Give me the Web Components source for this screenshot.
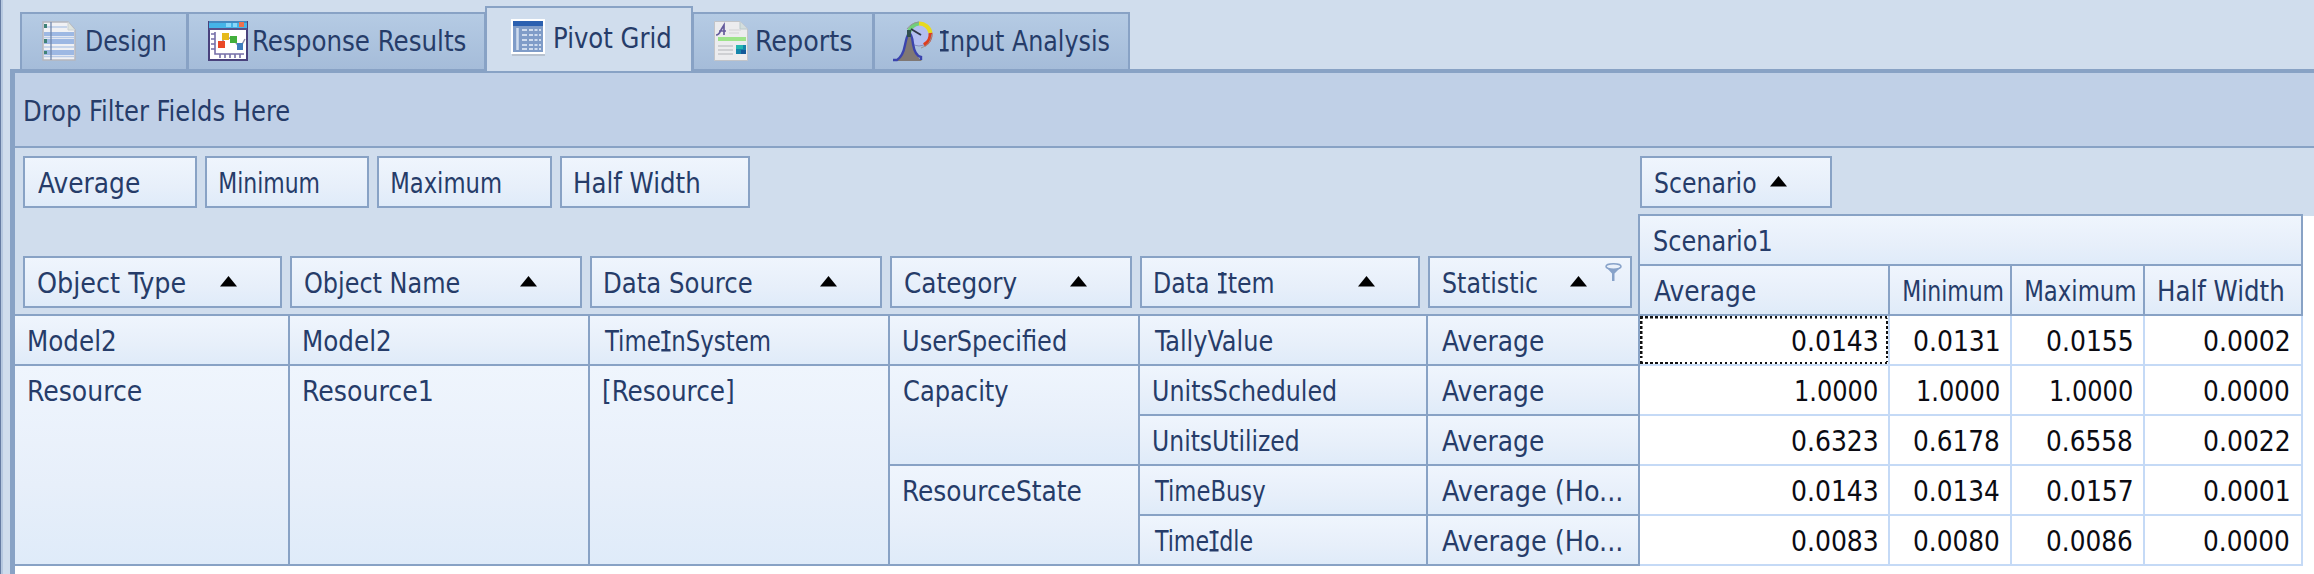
<!DOCTYPE html>
<html lang="en">
<head>
<meta charset="utf-8">
<title>Pivot Grid</title>
<style>
html, body { margin: 0; height: 574px; overflow: hidden; }
body {
  --line: #88a2c5; --soft: #c5daf6; --pane: #d0dded; --cell: linear-gradient(#eff5fd, #e7effa 60%, #dfebf9);
  background: var(--pane); color: #263c69;
  font: 27.5px "DejaVu Sans Condensed", "DejaVu Sans", sans-serif;
}
</style>
</head>
<body>
<experiment-view></experiment-view>
<script>
const define = (name, html, setup) => {
  const template = document.createElement('template');
  template.innerHTML = html;
  customElements.define(name, class extends HTMLElement {
    connectedCallback() {
      if (this.shadowRoot) return;
      this.attachShadow({ mode: 'open' }).append(template.content.cloneNode(true));
      if (setup) setup(this, this.shadowRoot);
    }
  });
};

/* A label whose glyphs are condensed or widened to fill the given width.
   An <i> inside it is a capital I that gets a bar at its head and its foot. */
const pen = document.createElement('canvas').getContext('2d');
pen.font = '27.5px "DejaVu Sans Condensed", "DejaVu Sans", sans-serif';
define('fit-text', `
  <style>
    :host { display: inline-block; white-space: nowrap; vertical-align: top; }
    span { display: inline-block; transform-origin: 0 0; }
    ::slotted(i) { font-style: normal !important; padding: 0 1px; margin: 0 1px; background-repeat: no-repeat;
      background-image: linear-gradient(#263c69, #263c69), linear-gradient(#263c69, #263c69);
      background-size: 100% 2.500px; background-position: 0 6px, 0 24px; }
  </style><span><slot></slot></span>`, (host, root) => {
  const m = pen.measureText(host.textContent);
  const bars = host.querySelectorAll('i').length;
  let left = m.actualBoundingBoxLeft, ink = left + m.actualBoundingBoxRight + bars * 4;
  if (host.textContent[0] === 'I') { ink -= left + 1; left = -1; }
  const w = +host.getAttribute('w') || ink, k = w / ink;
  host.style.width = w + 'px';
  root.querySelector('span').style.transform = `translateX(${left * k}px) scaleX(${k})`;
});

const icons = {
  design: `<svg width="34" height="40" viewBox="0 0 34 40"><path d="M1 1H26L33 9V39H1Z" fill="#f0f1f4" stroke="#b5b7bd" stroke-width="1.5"/><path d="M26 1V9H33" fill="#dfe5df" stroke="#ccd1d4"/><path d="M2 11h30v4H2zM2 18h30v5H2zM2 29h30v5H2z" fill="#9db8e3"/><path d="M2 6h23M2 16.500h30M2 26h30M2 35.500h30" stroke="#b8cbe8" stroke-width="1.500"/><path d="M9 1V39" stroke="#7187ad" stroke-width="1.300"/><path d="M2 3h3v4H2zM2 18h3v4H2zM2 30h3v3H2z" fill="#3f8277"/></svg>`,
  response: `<svg width="40" height="40" viewBox="0 0 40 40"><rect x="1" y="1" width="38" height="38" fill="#fff" stroke="#49427c" stroke-width="2"/><path d="M1 1h38v6H1z" fill="#45b4e8"/><path d="M1 0h38v2H1z" fill="#4489c0"/><path d="M18 2h5v4h-5zM25 2h4v4h-4z" fill="#8ad7fa"/><path d="M31 1h5v5h-5z" fill="#ef704d"/><path d="M1 8H39" stroke="#57508a" stroke-width="2"/><path d="M7 11V33H36M3 13h4M3 18h4M3 23h4M3 28h4M12 33v4M17 33v4M22 33v4M27 33v4M32 33v4" fill="none" stroke="#766fa8" stroke-width="1.600"/><path d="M13 23L17 16L25 18L32 27L37 18" fill="none" stroke="#8b8fa8" stroke-width="1.500"/><path d="M10 20h7v7h-7z" fill="#ea4827"/><path d="M14 12h7v7h-7z" fill="#e6ba1c"/><path d="M22 15h7v7h-7z" fill="#42af3b"/><path d="M29 22h6v7h-6z" fill="#3d7dbe"/></svg>`,
  pivot: `<svg width="34" height="38" viewBox="0 0 34 38"><path d="M1 35h33v2H1z" fill="#b8c2cf"/><path d="M0 0h34v35H0z" fill="#fff"/><path d="M2 2h30v31H2z" fill="#7f9cc8"/><path d="M2 2h30v5H2z" fill="#2b60b0"/><path d="M6.500 9v22" stroke="#cfdcee" stroke-width="2.500"/><path d="M11 11h19M11 16h19M11 21h19M11 26h19M11 30h19" stroke="#cfdcee" stroke-width="2" stroke-dasharray="5 2 4 1.500 3 1.500"/></svg>`,
  reports: `<svg width="34" height="40" viewBox="0 0 34 40"><path d="M.5.5H26L33.500 8V39.500H.5Z" fill="#ececee" stroke="#c2c4c8"/><path d="M26 1V8H33" fill="#d3dedd" stroke="#bac8ca"/><path d="M2 14Q5 14 7 9L10 4V14M5 10H12" fill="none" stroke="#655b9c" stroke-width="1.700"/><path d="M15 9h12M15 12h10" stroke="#d2d2d4"/><path d="M4 16h28v4H4z" fill="#9de489"/><path d="M4 25h15M4 29h15M4 33h15" stroke="#cfd0d3" stroke-width="2"/><path d="M22 24h10v9H22z" fill="#1685ab"/><path d="M22 24h7v4h-7z" fill="#25b6b0"/><path d="M27 29h5v4h-5z" fill="#145998"/></svg>`,
  input: `<svg width="40" height="41" viewBox="0 0 40 41"><circle cx="26" cy="14" r="11" fill="#b3bff0" stroke="#878ebd"/><path d="M16 12A11 11 0 0 1 26 2.500" fill="none" stroke="#70cf78" stroke-width="4"/><path d="M26 2.500A11.500 11.500 0 0 1 37.500 12" fill="none" stroke="#e7d91f" stroke-width="4"/><path d="M37.500 12A12 12 0 0 1 31 24" fill="none" stroke="#dd3d20" stroke-width="4"/><path d="M14 8Q18 2 26 1M39 13Q38 24 28 27" fill="none" stroke="#969394"/><path d="M18 8L28 14" stroke="#30374a" stroke-width="2"/><path d="M3 40Q10 36 12 24Q15 10 16 11Q19 12 21 25Q23 36 29 40Z" fill="#807873"/><path d="M0 39H4Q10 35 12 24Q14 14 16 12Q19 13 20 23Q22 35 28 36V39" fill="none" stroke="#3b44ad" stroke-width="2.400"/><path d="M14 9h4v7h-4z" fill="#31504f"/></svg>`
};

define('page-tab', `
  <style>
    :host { display: flex; box-sizing: border-box; height: 57px; margin-top: 12px; line-height: 54px;
      border: 2px solid var(--line); border-bottom: 0; background: linear-gradient(#b5cbe4, #a5bcd9); }
    :host([active]) { height: 65px; margin-top: 6px; line-height: 61px; background: var(--pane); padding-bottom: 2px; }
    #i { line-height: 0; padding-top: 7px; flex: none; }
    :host([active]) #i { padding-top: 11px; }
    svg { display: block; }
  </style><div id="i"></div><slot></slot>`, (host, root) => {
  const i = root.getElementById('i');
  i.innerHTML = icons[host.getAttribute('icon')];
  i.style.marginLeft = host.getAttribute('pad') + 'px';
  i.style.marginRight = host.getAttribute('gap') + 'px';
  host.style.width = host.getAttribute('w') + 'px';
});

define('field-chip', `
  <style>
    :host { display: flex; box-sizing: border-box; height: 52px; line-height: 51px; padding-left: 12.500px; flex: none;
      border: 2px solid var(--line); background: var(--cell); }
    svg { display: none; flex: none; }
    :host([sort]) .s { display: block; margin: 18px 0 0 auto; }
    :host([filter]) .f { display: block; margin: 5px 8px 0 18px; }
  </style><slot></slot>
  <svg class="s" width="17" height="11" viewBox="0 0 17 11"><path d="M8.500 0L17 10.500H0Z" fill="#000"/></svg>
  <svg class="f" width="17" height="18" viewBox="0 0 17 18"><path d="M1 4L7 10.500V18H9.500V10.500L16 4Z" fill="#87a2c9"/><ellipse cx="8.500" cy="3.500" rx="7.500" ry="2.700" fill="#eaf1fa" stroke="#87a2c9" stroke-width="1.500"/></svg>`,
  (host, root) => {
    host.style.width = host.getAttribute('w') + 'px';
    if (host.hasAttribute('sort')) root.querySelector('.s').style.marginRight = host.getAttribute('sort') + 'px';
  });

define('head-cell', `
  <style>
    :host { display: block; box-sizing: border-box; line-height: 51px; overflow: hidden; padding-left: 14px;
      border: solid var(--line); border-width: 0 2px 2px 0; background: var(--cell); }
  </style><slot></slot>`);

define('value-cell', `
  <style>
    :host { display: block; box-sizing: border-box; height: 50px; line-height: 51px; text-align: right; color: #0b0b12;
      border: solid var(--soft); border-width: 0 2px 2px 0; background-color: #fff; padding-right: 12px; }
    :host([focus]) {
      --h: repeating-linear-gradient(90deg, #111 0 2.500px, #fff 2.500px 5px);
      --v: repeating-linear-gradient(#111 0 2.500px, #fff 2.500px 5px);
      background: var(--h) top/100% 2.500px no-repeat, var(--h) bottom/100% 2.500px no-repeat,
        var(--v) left/2.500px 100% no-repeat, var(--v) right/2.500px 100% no-repeat, #fff; background-origin: padding-box; background-clip: padding-box; }
  </style><slot></slot>`);

const T = (s, w) => `<fit-text w="${w}">${s.replace('I', '<i>I</i>')}</fit-text>`;
const H = (s, w, rows = 1) => `<head-cell style="grid-row:span ${rows}">${T(s, w)}</head-cell>`;
const values = [
  ['0.0143', '0.0131', '0.0155', '0.0002'],
  ['1.0000', '1.0000', '1.0000', '0.0000'],
  ['0.6323', '0.6178', '0.6558', '0.0022'],
  ['0.0143', '0.0134', '0.0157', '0.0001'],
  ['0.0083', '0.0080', '0.0086', '0.0000']
];
const V = r => values[r].map((v, c) =>
  `<value-cell${r + c ? '' : ' focus'} style="padding-right:${[11, 11, 11, 12][c]}px">${T(v, v[0] === '1' ? 81.5 : 85)}</value-cell>`).join('');

define('pivot-grid', `
  <style>
    :host { display: block; background: #fff; }
    .filter { height: 73px; line-height: 76px; padding-left: 9.500px; background: #c0d0e7; border-bottom: 2px solid var(--line); }
    .top { display: grid; grid-template-columns: 1625px 1fr; height: 168px; }
    .rows { background: var(--pane); display: flex; flex-direction: column; justify-content: space-between; padding: 8px 0 6px 8px;
      border-bottom: 2px solid var(--line); }
    .row { display: flex; gap: 8px; }
    .cols { margin-left: -2px; }
    .band { background: var(--pane); height: 66px; padding: 8px 0 0 2px; box-sizing: border-box; }
    .edge { background: linear-gradient(var(--pane) 2px, #fff 2px); }
    .heads { display: grid; grid-template: 52px 50px / 252px 122px 133px 158px; width: 665px; }
    .heads > :first-child { grid-column: span 4; border-top: 2px solid var(--line); }
    .heads > .l { border-left: 2px solid var(--line); }
    .body { display: grid; grid-auto-rows: 50px; grid-template-columns: 275px 300px 300px 250px 288px 212px 250px 122px 133px 158px; }
  </style>
  <div class="filter">${T('Drop Filter Fields Here', 264)}</div>
  <div class="top">
    <div class="rows">
      <div class="row">
        <field-chip w="174">${T('Average', 101)}</field-chip>
        <field-chip w="164">${T('Minimum', 99)}</field-chip>
        <field-chip w="175">${T('Maximum', 109)}</field-chip>
        <field-chip w="190">${T('Half Width', 124)}</field-chip>
      </div>
      <div class="row">
        <field-chip w="259" sort="43">${T('Object Type', 147)}</field-chip>
        <field-chip w="292" sort="43">${T('Object Name', 154)}</field-chip>
        <field-chip w="292" sort="43">${T('Data Source', 146.5)}</field-chip>
        <field-chip w="242" sort="43">${T('Category', 111.5)}</field-chip>
        <field-chip w="280" sort="43">${T('Data Item', 118.5)}</field-chip>
        <field-chip w="204" sort="0" filter>${T('Statistic', 94.5)}</field-chip>
      </div>
    </div>
    <div class="cols">
      <div class="band"><field-chip w="192" sort="43">${T('Scenario', 100.5)}</field-chip></div>
      <div class="edge"><div class="heads">
        <head-cell class="l">${T('Scenario1', 117)}</head-cell>
        <head-cell class="l">${T('Average', 101)}</head-cell>
        <head-cell>${T('Minimum', 99)}</head-cell>
        <head-cell>${T('Maximum', 109.5)}</head-cell>
        <head-cell>${T('Half Width', 124)}</head-cell>
      </div></div>
    </div>
  </div>
  <div class="body">
    ${H('Model2', 86)}${H('Model2', 86)}${H('TimeInSystem', 166)}${H('UserSpecified', 161.5)}${H('TallyValue', 118)}${H('Average', 101)}${V(0)}
    ${H('Resource', 112, 4)}${H('Resource1', 128, 4)}${H('[Resource]', 129, 4)}${H('Capacity', 104, 2)}${H('UnitsScheduled', 181.5)}${H('Average', 101)}${V(1)}
    ${H('UnitsUtilized', 144)}${H('Average', 101)}${V(2)}
    ${H('ResourceState', 176.5, 2)}${H('TimeBusy', 111)}${H('Average (Ho...', 179.5)}${V(3)}
    ${H('TimeIdle', 98)}${H('Average (Ho...', 179.5)}${V(4)}
  </div>`);

define('experiment-view', `
  <style>
    :host { display: flex; flex-direction: column; height: 574px; box-sizing: border-box; width: 2314px; overflow: hidden;
      border-left: 1px solid #667ca3; background: linear-gradient(90deg, #b6c8e0 2px, var(--pane) 2px); }
    nav { display: flex; height: 69px; flex: none; padding-left: 19px; align-items: flex-start; }
    page-tab { flex: none; }
    page-tab + page-tab { margin-left: -1px; }
    page-tab[active] { position: relative; z-index: 1; }
    .frame { flex: 1; min-height: 0; display: flex; flex-direction: column; margin-left: 9px; border-left: 5px solid var(--line); }
    .strip { height: 4px; flex: none; background: var(--line); }
    pivot-grid { flex: 1; }
  </style>
  <nav>
    <page-tab icon="design" w="168" pad="20" gap="11">${T('Design', 78)}</page-tab>
    <page-tab icon="response" w="299" pad="18.500" gap="6">${T('Response Results', 211.5)}</page-tab>
    <page-tab active icon="pivot" w="208" pad="23.500" gap="10">${T('Pivot Grid', 115)}</page-tab>
    <page-tab icon="reports" w="182" pad="19.500" gap="9">${T('Reports', 94.5)}</page-tab>
    <page-tab icon="input" w="257" pad="18" gap="6.500">${T('Input Analysis', 169)}</page-tab>
  </nav>
  <div class="frame"><div class="strip"></div><pivot-grid></pivot-grid></div>`);
</script>
</body>
</html>
